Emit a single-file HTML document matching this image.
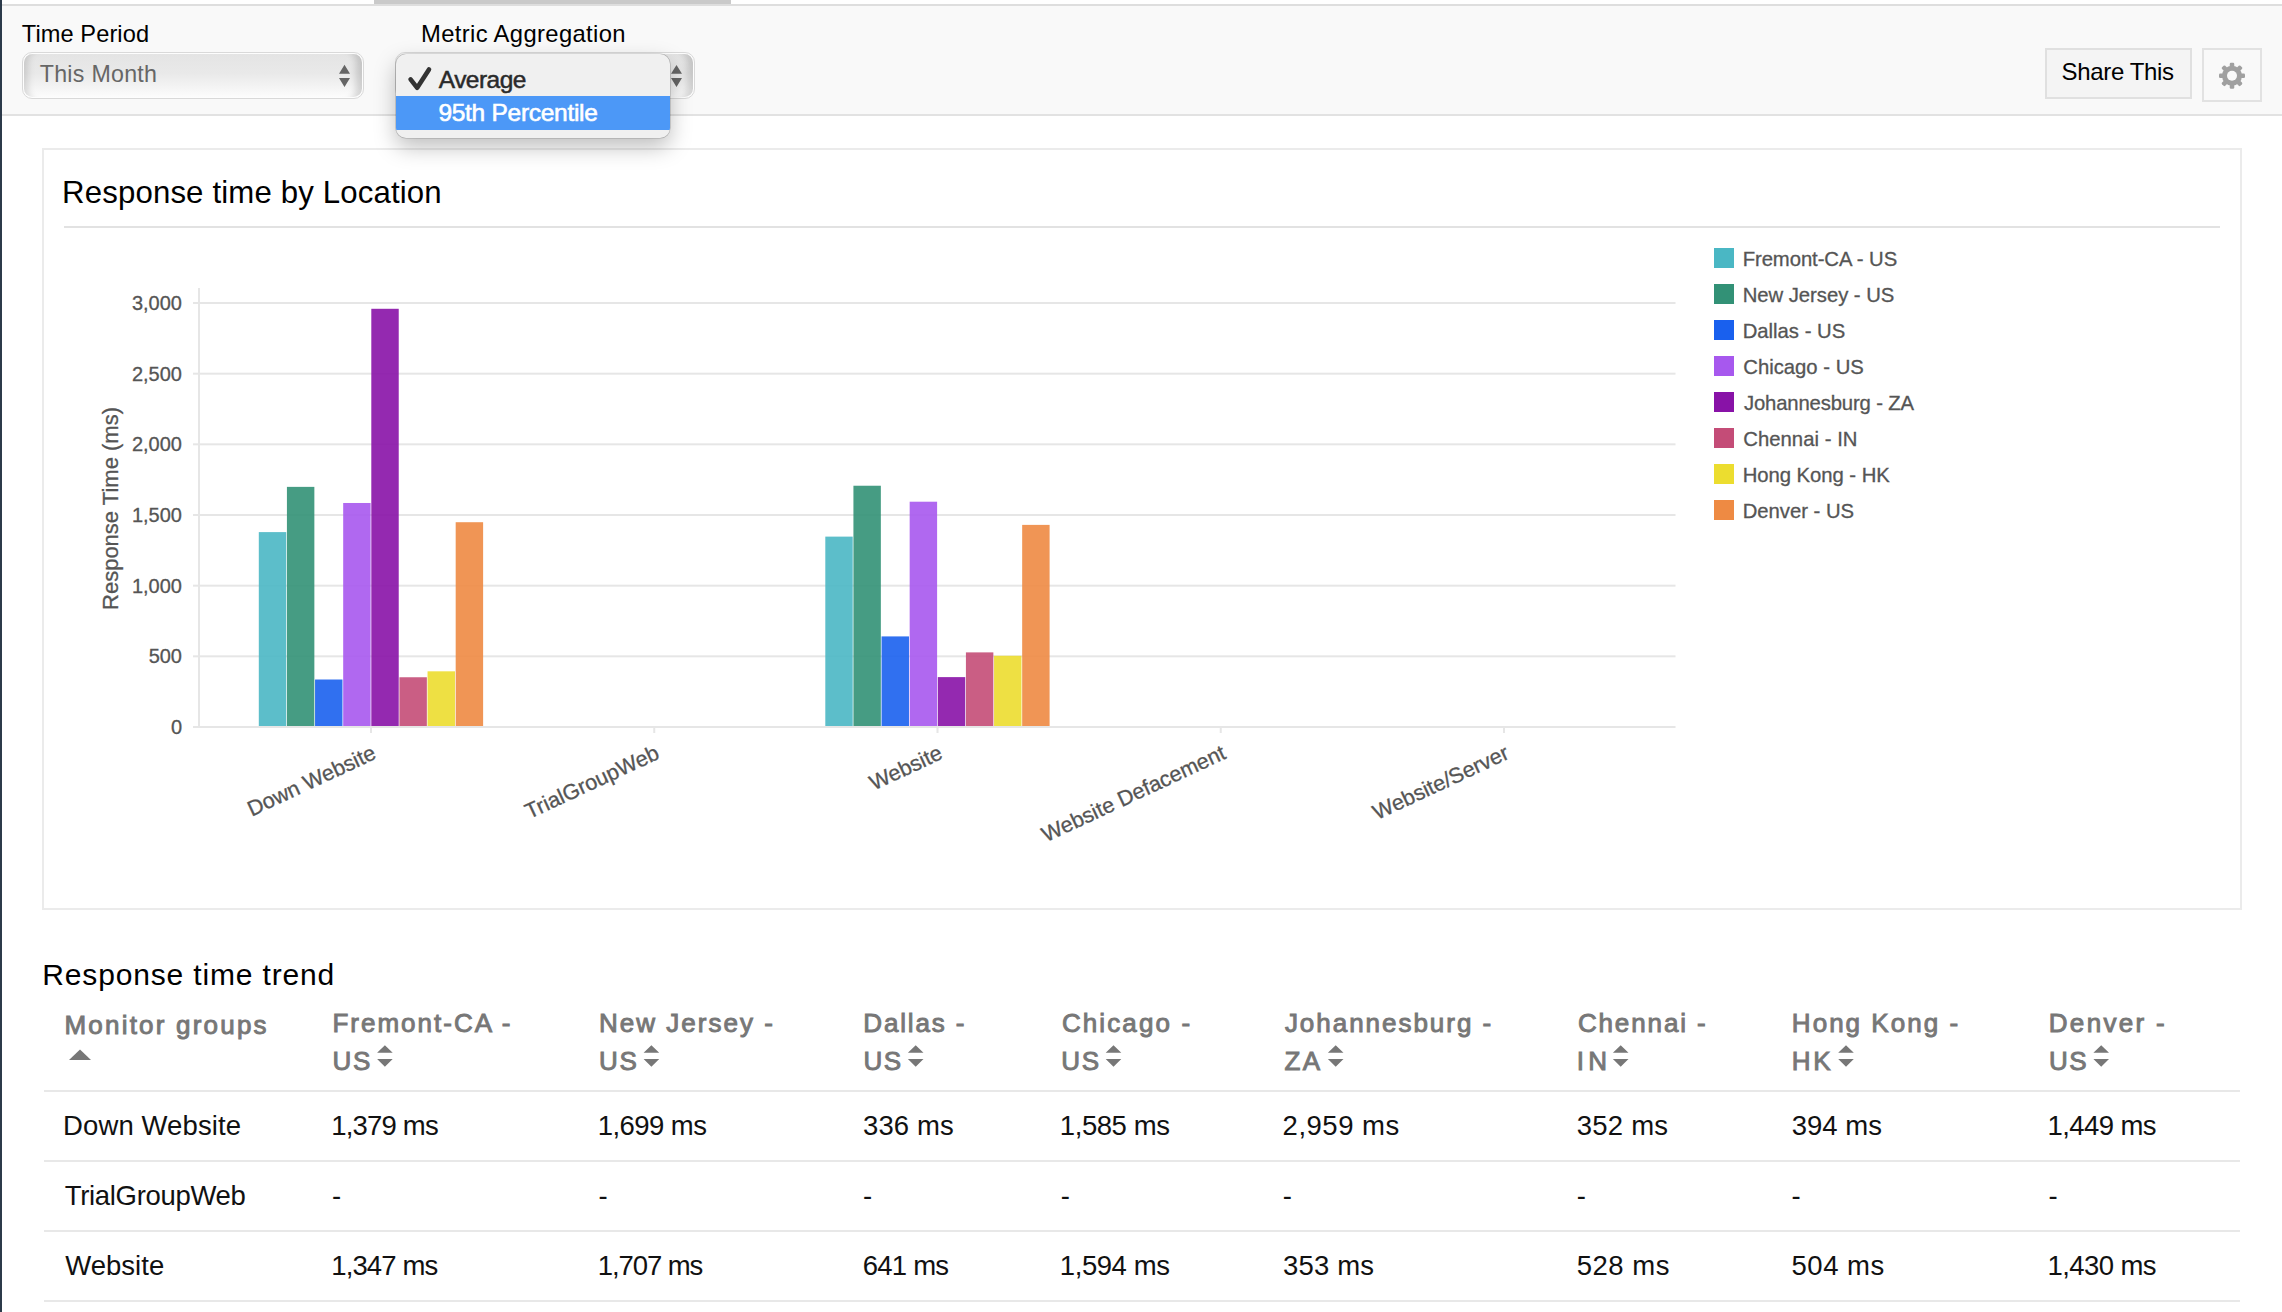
<!DOCTYPE html>
<html><head><meta charset="utf-8">
<style>
html,body{margin:0;padding:0;}
body{width:2282px;height:1312px;overflow:hidden;background:#fff;position:relative;font-family:"Liberation Sans", sans-serif;}
.abs{position:absolute;}
svg text{font-family:"Liberation Sans", sans-serif;}
</style></head><body>
<div class="abs" style="left:0;top:0;width:2282px;height:4px;background:#fff"></div>
<div class="abs" style="left:374px;top:0;width:357px;height:4px;background:#cacaca"></div>
<div class="abs" style="left:0;top:4px;width:2282px;height:2px;background:#dedede"></div>
<div class="abs" style="left:0;top:6px;width:2282px;height:108px;background:#f9f9f9"></div>
<div class="abs" style="left:0;top:114px;width:2282px;height:2px;background:#e2e2e2"></div>
<div class="abs" style="left:0;top:0;width:2px;height:1312px;background:#2c3a4a"></div>

<!-- select 1 -->
<div class="abs" style="left:22px;top:52px;width:342px;height:47px;box-sizing:border-box;border:1.2px solid #d9d9d9;border-radius:10px;background:#fdfdfd;">
  <div class="abs" style="left:1.3px;top:1.3px;right:1.3px;bottom:1.3px;border-radius:8.5px;background:linear-gradient(#e4e4e4,#e9e9e9 45%,#f3f3f3 75%,#fcfcfc);box-shadow:inset 11px 0 7px -7px rgba(0,0,0,.13), inset -13px 0 7px -7px rgba(0,0,0,.15);"></div>
</div>
<!-- select 2 -->
<div class="abs" style="left:395px;top:52px;width:300px;height:47px;box-sizing:border-box;border:1.2px solid #d9d9d9;border-radius:10px;background:#fdfdfd;">
  <div class="abs" style="left:1.3px;top:1.3px;right:1.3px;bottom:1.3px;border-radius:8.5px;background:linear-gradient(#e4e4e4,#e9e9e9 45%,#f3f3f3 75%,#fcfcfc);box-shadow:inset 11px 0 7px -7px rgba(0,0,0,.13), inset -13px 0 7px -7px rgba(0,0,0,.15);"></div>
</div>

<!-- card -->
<div class="abs" style="left:42px;top:148px;width:2200px;height:762px;box-sizing:border-box;border:2px solid #ebebeb;"></div>

<!-- share + gear -->
<div class="abs" style="left:2045px;top:48px;width:147px;height:51px;box-sizing:border-box;border:2px solid #e0e0e0;background:#f4f4f4"></div>
<div class="abs" style="left:2202px;top:48px;width:60px;height:54px;box-sizing:border-box;border:2px solid #e2e2e2;background:#f9f9f9"></div>

<svg class="abs" style="left:0;top:0" width="2282" height="1312" viewBox="0 0 2282 1312">
<text x="21.77" y="42" font-size="23.6" fill="#000" textLength="127.25" lengthAdjust="spacing">Time Period</text>
<text x="421.05" y="42" font-size="23.8" fill="#000" textLength="204.5" lengthAdjust="spacing">Metric Aggregation</text>
<text x="2061.61" y="80" font-size="24" fill="#000" textLength="112.46" lengthAdjust="spacing">Share This</text>
<text x="62.04" y="202.5" font-size="31.2" fill="#000" textLength="379.59" lengthAdjust="spacing">Response time by Location</text>
<rect x="64" y="226" width="2156" height="2" fill="#e2e2e2"/>
<rect x="193" y="726.00" width="1482.5" height="2" fill="#e6e6e6"/>
<rect x="193" y="655.33" width="1482.5" height="2" fill="#e6e6e6"/>
<rect x="193" y="584.67" width="1482.5" height="2" fill="#e6e6e6"/>
<rect x="193" y="514.00" width="1482.5" height="2" fill="#e6e6e6"/>
<rect x="193" y="443.33" width="1482.5" height="2" fill="#e6e6e6"/>
<rect x="193" y="372.67" width="1482.5" height="2" fill="#e6e6e6"/>
<rect x="193" y="302.00" width="1482.5" height="2" fill="#e6e6e6"/>
<rect x="198" y="288" width="2" height="439" fill="#e6e6e6"/>
<rect x="370.00" y="727" width="2" height="6" fill="#e6e6e6"/>
<rect x="653.25" y="727" width="2" height="6" fill="#e6e6e6"/>
<rect x="936.50" y="727" width="2" height="6" fill="#e6e6e6"/>
<rect x="1219.75" y="727" width="2" height="6" fill="#e6e6e6"/>
<rect x="1503.00" y="727" width="2" height="6" fill="#e6e6e6"/>
<text x="182" y="734.00" font-size="20" fill="#555" text-anchor="end" stroke="#555" stroke-width="0.3">0</text>
<text x="182" y="663.33" font-size="20" fill="#555" text-anchor="end" stroke="#555" stroke-width="0.3">500</text>
<text x="182" y="592.67" font-size="20" fill="#555" text-anchor="end" stroke="#555" stroke-width="0.3">1,000</text>
<text x="182" y="522.00" font-size="20" fill="#555" text-anchor="end" stroke="#555" stroke-width="0.3">1,500</text>
<text x="182" y="451.33" font-size="20" fill="#555" text-anchor="end" stroke="#555" stroke-width="0.3">2,000</text>
<text x="182" y="380.67" font-size="20" fill="#555" text-anchor="end" stroke="#555" stroke-width="0.3">2,500</text>
<text x="182" y="310.00" font-size="20" fill="#555" text-anchor="end" stroke="#555" stroke-width="0.3">3,000</text>
<text x="0" y="0" font-size="22" fill="#555" stroke="#555" stroke-width="0.3" text-anchor="middle" textLength="203" lengthAdjust="spacing" transform="translate(118,508.5) rotate(-90)">Response Time (ms)</text>
<rect x="258.80" y="532.10" width="27.43" height="193.90" fill="#4ab7c4" fill-opacity="0.9"/>
<rect x="286.93" y="486.87" width="27.43" height="239.13" fill="#329176" fill-opacity="0.9"/>
<rect x="315.05" y="679.51" width="27.43" height="46.49" fill="#1960ee" fill-opacity="0.9"/>
<rect x="343.18" y="502.99" width="27.43" height="223.01" fill="#a758ee" fill-opacity="0.9"/>
<rect x="371.30" y="308.79" width="27.43" height="417.21" fill="#8812a7" fill-opacity="0.9"/>
<rect x="399.43" y="677.25" width="27.43" height="48.75" fill="#c44c77" fill-opacity="0.9"/>
<rect x="427.55" y="671.31" width="27.43" height="54.69" fill="#ecdd2f" fill-opacity="0.9"/>
<rect x="455.68" y="522.21" width="27.43" height="203.79" fill="#ee8a43" fill-opacity="0.9"/>
<rect x="825.30" y="536.62" width="27.43" height="189.38" fill="#4ab7c4" fill-opacity="0.9"/>
<rect x="853.42" y="485.74" width="27.43" height="240.26" fill="#329176" fill-opacity="0.9"/>
<rect x="881.55" y="636.41" width="27.43" height="89.59" fill="#1960ee" fill-opacity="0.9"/>
<rect x="909.67" y="501.71" width="27.43" height="224.29" fill="#a758ee" fill-opacity="0.9"/>
<rect x="937.80" y="677.11" width="27.43" height="48.89" fill="#8812a7" fill-opacity="0.9"/>
<rect x="965.92" y="652.38" width="27.43" height="73.62" fill="#c44c77" fill-opacity="0.9"/>
<rect x="994.05" y="655.77" width="27.43" height="70.23" fill="#ecdd2f" fill-opacity="0.9"/>
<rect x="1022.17" y="524.89" width="27.43" height="201.11" fill="#ee8a43" fill-opacity="0.9"/>
<text x="0" y="0" font-size="21.6" fill="#555" stroke="#555" stroke-width="0.3" text-anchor="end" transform="translate(377.50,758) rotate(-25)">Down Website</text>
<text x="0" y="0" font-size="21.6" fill="#555" stroke="#555" stroke-width="0.3" text-anchor="end" transform="translate(660.75,758) rotate(-25)">TrialGroupWeb</text>
<text x="0" y="0" font-size="21.6" fill="#555" stroke="#555" stroke-width="0.3" text-anchor="end" transform="translate(944.00,758) rotate(-25)">Website</text>
<text x="0" y="0" font-size="21.6" fill="#555" stroke="#555" stroke-width="0.3" text-anchor="end" transform="translate(1227.25,758) rotate(-25)">Website Defacement</text>
<text x="0" y="0" font-size="21.6" fill="#555" stroke="#555" stroke-width="0.3" text-anchor="end" transform="translate(1510.50,758) rotate(-25)">Website/Server</text>
<rect x="1714" y="248" width="20" height="20" fill="#4ab7c4"/>
<text x="1742.63" y="265.9" font-size="20.3" fill="#555" textLength="154.6" lengthAdjust="spacing" stroke="#555" stroke-width="0.3">Fremont-CA - US</text>
<rect x="1714" y="284" width="20" height="20" fill="#329176"/>
<text x="1742.63" y="301.9" font-size="20.3" fill="#555" textLength="151.7" lengthAdjust="spacing" stroke="#555" stroke-width="0.3">New Jersey - US</text>
<rect x="1714" y="320" width="20" height="20" fill="#1960ee"/>
<text x="1742.63" y="337.9" font-size="20.3" fill="#555" textLength="102.6" lengthAdjust="spacing" stroke="#555" stroke-width="0.3">Dallas - US</text>
<rect x="1714" y="356" width="20" height="20" fill="#a758ee"/>
<text x="1743.27" y="373.9" font-size="20.3" fill="#555" textLength="120.56" lengthAdjust="spacing" stroke="#555" stroke-width="0.3">Chicago - US</text>
<rect x="1714" y="392" width="20" height="20" fill="#8812a7"/>
<text x="1743.98" y="409.9" font-size="20.3" fill="#555" textLength="170.06" lengthAdjust="spacing" stroke="#555" stroke-width="0.3">Johannesburg - ZA</text>
<rect x="1714" y="428" width="20" height="20" fill="#c44c77"/>
<text x="1743.27" y="445.9" font-size="20.3" fill="#555" textLength="114.19" lengthAdjust="spacing" stroke="#555" stroke-width="0.3">Chennai - IN</text>
<rect x="1714" y="464" width="20" height="20" fill="#ecdd2f"/>
<text x="1742.63" y="481.9" font-size="20.3" fill="#555" textLength="147.19" lengthAdjust="spacing" stroke="#555" stroke-width="0.3">Hong Kong - HK</text>
<rect x="1714" y="500" width="20" height="20" fill="#ee8a43"/>
<text x="1742.63" y="517.9" font-size="20.3" fill="#555" textLength="111.5" lengthAdjust="spacing" stroke="#555" stroke-width="0.3">Denver - US</text>
<text x="42.34" y="984.7" font-size="30" fill="#000" textLength="291.89" lengthAdjust="spacing">Response time trend</text>
<text x="64.47" y="1034" font-size="26" fill="#777" textLength="202.07" lengthAdjust="spacing" stroke="#777" stroke-width="0.95">Monitor groups</text>
<text x="332.47" y="1032.2" font-size="26" fill="#777" textLength="177.99" lengthAdjust="spacing" stroke="#777" stroke-width="0.95">Fremont-CA -</text>
<text x="598.97" y="1032.2" font-size="26" fill="#777" textLength="173.89" lengthAdjust="spacing" stroke="#777" stroke-width="0.95">New Jersey -</text>
<text x="863.27" y="1032.2" font-size="26" fill="#777" textLength="101.19" lengthAdjust="spacing" stroke="#777" stroke-width="0.95">Dallas -</text>
<text x="1061.88" y="1032.2" font-size="26" fill="#777" textLength="128.18" lengthAdjust="spacing" stroke="#777" stroke-width="0.95">Chicago -</text>
<text x="1284.89" y="1032.2" font-size="26" fill="#777" textLength="206.36" lengthAdjust="spacing" stroke="#777" stroke-width="0.95">Johannesburg -</text>
<text x="1577.88" y="1032.2" font-size="26" fill="#777" textLength="127.78" lengthAdjust="spacing" stroke="#777" stroke-width="0.95">Chennai -</text>
<text x="1791.87" y="1032.2" font-size="26" fill="#777" textLength="166.19" lengthAdjust="spacing" stroke="#777" stroke-width="0.95">Hong Kong -</text>
<text x="2048.77" y="1032.2" font-size="26" fill="#777" textLength="115.99" lengthAdjust="spacing" stroke="#777" stroke-width="0.95">Denver -</text>
<path d="M69,1060 L80,1049.6 L91,1060 Z" fill="#777"/>
<text x="332.59" y="1069.8" font-size="26" fill="#777" textLength="37.8" lengthAdjust="spacing" stroke="#777" stroke-width="0.95">US</text>
<path d="M377.1,1052.8 L384.9,1045.3 L392.7,1052.8 Z M377.1,1059 L384.9,1066.8 L392.7,1059 Z" fill="#777"/>
<text x="599.09" y="1069.8" font-size="26" fill="#777" textLength="37.8" lengthAdjust="spacing" stroke="#777" stroke-width="0.95">US</text>
<path d="M643.6,1052.8 L651.4,1045.3 L659.2,1052.8 Z M643.6,1059 L651.4,1066.8 L659.2,1059 Z" fill="#777"/>
<text x="863.39" y="1069.8" font-size="26" fill="#777" textLength="37.8" lengthAdjust="spacing" stroke="#777" stroke-width="0.95">US</text>
<path d="M907.9,1052.8 L915.7,1045.3 L923.5,1052.8 Z M907.9,1059 L915.7,1066.8 L923.5,1059 Z" fill="#777"/>
<text x="1061.19" y="1069.8" font-size="26" fill="#777" textLength="37.8" lengthAdjust="spacing" stroke="#777" stroke-width="0.95">US</text>
<path d="M1105.7,1052.8 L1113.5,1045.3 L1121.3,1052.8 Z M1105.7,1059 L1113.5,1066.8 L1121.3,1059 Z" fill="#777"/>
<text x="1284.47" y="1069.8" font-size="26" fill="#777" textLength="35.58" lengthAdjust="spacing" stroke="#777" stroke-width="0.95">ZA</text>
<path d="M1327.9,1052.8 L1335.7,1045.3 L1343.5,1052.8 Z M1327.9,1059 L1335.7,1066.8 L1343.5,1059 Z" fill="#777"/>
<text x="1576.8" y="1069.8" font-size="26" fill="#777" textLength="30.32" lengthAdjust="spacing" stroke="#777" stroke-width="0.95">IN</text>
<path d="M1612.9,1052.8 L1620.7,1045.3 L1628.5,1052.8 Z M1612.9,1059 L1620.7,1066.8 L1628.5,1059 Z" fill="#777"/>
<text x="1791.87" y="1069.8" font-size="26" fill="#777" textLength="38.72" lengthAdjust="spacing" stroke="#777" stroke-width="0.95">HK</text>
<path d="M1838.2,1052.8 L1846.0,1045.3 L1853.8,1052.8 Z M1838.2,1059 L1846.0,1066.8 L1853.8,1059 Z" fill="#777"/>
<text x="2048.89" y="1069.8" font-size="26" fill="#777" textLength="37.8" lengthAdjust="spacing" stroke="#777" stroke-width="0.95">US</text>
<path d="M2093.4,1052.8 L2101.2,1045.3 L2109.0,1052.8 Z M2093.4,1059 L2101.2,1066.8 L2109.0,1059 Z" fill="#777"/>
<rect x="44" y="1090" width="2196" height="2" fill="#e8e8e8"/>
<rect x="44" y="1160" width="2196" height="2" fill="#e8e8e8"/>
<rect x="44" y="1230" width="2196" height="2" fill="#e8e8e8"/>
<rect x="44" y="1300" width="2196" height="2" fill="#e8e8e8"/>
<text x="63.04" y="1135.3" font-size="27.5" fill="#111" textLength="177.98" lengthAdjust="spacing">Down Website</text>
<text x="331.21" y="1135.3" font-size="27.5" fill="#111" textLength="107.49" lengthAdjust="spacing">1,379 ms</text>
<text x="597.71" y="1135.3" font-size="27.5" fill="#111" textLength="109.19" lengthAdjust="spacing">1,699 ms</text>
<text x="863.05" y="1135.3" font-size="27.5" fill="#111" textLength="90.74" lengthAdjust="spacing">336 ms</text>
<text x="1059.81" y="1135.3" font-size="27.5" fill="#111" textLength="110.09" lengthAdjust="spacing">1,585 ms</text>
<text x="1282.62" y="1135.3" font-size="27.5" fill="#111" textLength="116.68" lengthAdjust="spacing">2,959 ms</text>
<text x="1576.85" y="1135.3" font-size="27.5" fill="#111" textLength="91.14" lengthAdjust="spacing">352 ms</text>
<text x="1791.65" y="1135.3" font-size="27.5" fill="#111" textLength="90.34" lengthAdjust="spacing">394 ms</text>
<text x="2047.51" y="1135.3" font-size="27.5" fill="#111" textLength="108.99" lengthAdjust="spacing">1,449 ms</text>
<text x="64.68" y="1205.3" font-size="27.5" fill="#111" textLength="181.17" lengthAdjust="spacing">TrialGroupWeb</text>
<text x="332.08" y="1205.3" font-size="27.5" fill="#111">-</text>
<text x="598.58" y="1205.3" font-size="27.5" fill="#111">-</text>
<text x="862.88" y="1205.3" font-size="27.5" fill="#111">-</text>
<text x="1060.68" y="1205.3" font-size="27.5" fill="#111">-</text>
<text x="1282.78" y="1205.3" font-size="27.5" fill="#111">-</text>
<text x="1576.68" y="1205.3" font-size="27.5" fill="#111">-</text>
<text x="1791.48" y="1205.3" font-size="27.5" fill="#111">-</text>
<text x="2048.38" y="1205.3" font-size="27.5" fill="#111">-</text>
<text x="65.18" y="1275.1" font-size="27.5" fill="#111" textLength="99.04" lengthAdjust="spacing">Website</text>
<text x="331.21" y="1275.1" font-size="27.5" fill="#111" textLength="107.09" lengthAdjust="spacing">1,347 ms</text>
<text x="597.71" y="1275.1" font-size="27.5" fill="#111" textLength="105.59" lengthAdjust="spacing">1,707 ms</text>
<text x="862.7" y="1275.1" font-size="27.5" fill="#111" textLength="86.39" lengthAdjust="spacing">641 ms</text>
<text x="1059.81" y="1275.1" font-size="27.5" fill="#111" textLength="110.09" lengthAdjust="spacing">1,594 ms</text>
<text x="1282.95" y="1275.1" font-size="27.5" fill="#111" textLength="91.04" lengthAdjust="spacing">353 ms</text>
<text x="1576.8" y="1275.1" font-size="27.5" fill="#111" textLength="92.59" lengthAdjust="spacing">528 ms</text>
<text x="1791.6" y="1275.1" font-size="27.5" fill="#111" textLength="92.59" lengthAdjust="spacing">504 ms</text>
<text x="2047.51" y="1275.1" font-size="27.5" fill="#111" textLength="109.09" lengthAdjust="spacing">1,430 ms</text>
<text x="39.68" y="82" font-size="23.2" fill="#666" textLength="117.33" lengthAdjust="spacing">This Month</text>
<path d="M339,73.7 L344.5,64.8 L350,73.7 Z M339,78 L344.5,87 L350,78 Z" fill="#666"/>
<path d="M671,73.7 L676.5,65 L682,73.7 Z M671,78 L676.5,87 L682,78 Z" fill="#666"/>
<!-- gear -->
<g transform="translate(2232,75.8)" fill="#a0a0a0">
<circle r="10.0"/>
<rect x="-2.25" y="-13.0" width="4.5" height="13.0" rx="1.2" transform="rotate(0.0)"/>
<rect x="-2.25" y="-13.0" width="4.5" height="13.0" rx="1.2" transform="rotate(45.0)"/>
<rect x="-2.25" y="-13.0" width="4.5" height="13.0" rx="1.2" transform="rotate(90.0)"/>
<rect x="-2.25" y="-13.0" width="4.5" height="13.0" rx="1.2" transform="rotate(135.0)"/>
<rect x="-2.25" y="-13.0" width="4.5" height="13.0" rx="1.2" transform="rotate(180.0)"/>
<rect x="-2.25" y="-13.0" width="4.5" height="13.0" rx="1.2" transform="rotate(225.0)"/>
<rect x="-2.25" y="-13.0" width="4.5" height="13.0" rx="1.2" transform="rotate(270.0)"/>
<rect x="-2.25" y="-13.0" width="4.5" height="13.0" rx="1.2" transform="rotate(315.0)"/>
<circle r="5.0" fill="#f9f9f9"/>
</g>
</svg>

<!-- dropdown menu -->
<div class="abs" style="left:395.6px;top:54.2px;width:274.6px;height:84.2px;border-radius:10px;background:#f0f0f0;box-shadow:0 9px 22px rgba(0,0,0,.26),0 0 0 0.6px rgba(0,0,0,.22);overflow:hidden">
  <div class="abs" style="left:0;top:42px;width:100%;height:33.6px;background:#4c98f7"></div>
  <svg class="abs" style="left:0;top:-0.8px" width="275" height="86">
    <path d="M14.6,26.4 L21.2,34.8 L33,16.4" fill="none" stroke="#333" stroke-width="4.6" stroke-linecap="round" stroke-linejoin="round"/>
    <text x="42.8" y="34.6" font-size="24.5" fill="#2a2a2a" stroke="#2a2a2a" stroke-width="0.5" textLength="87.6" lengthAdjust="spacing">Average</text>
    <text x="42.4" y="68.2" font-size="24.5" fill="#fff" stroke="#fff" stroke-width="0.6" textLength="159.5" lengthAdjust="spacing">95th Percentile</text>
  </svg>
</div>
</body></html>
